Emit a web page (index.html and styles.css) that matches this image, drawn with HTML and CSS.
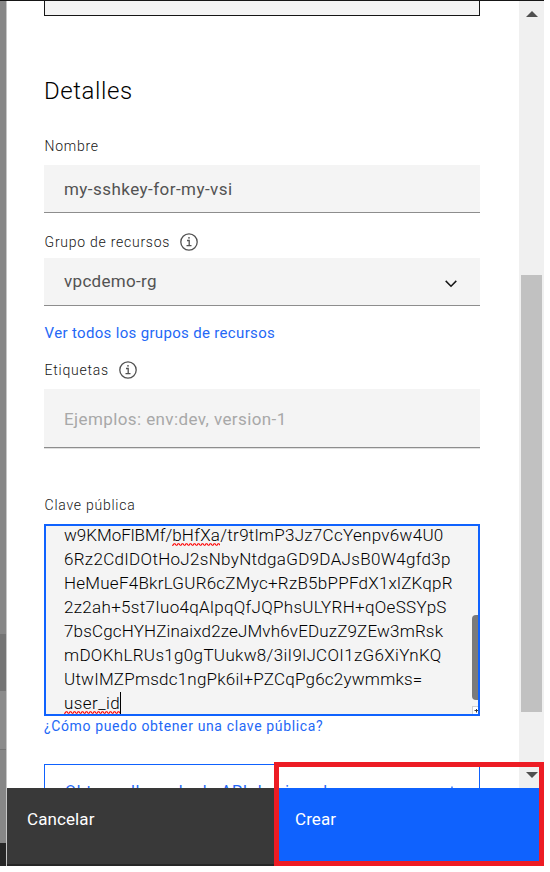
FILE: index.html
```
<!DOCTYPE html>
<html lang="es">
<head>
<meta charset="utf-8">
<title>Detalles</title>
<link rel="stylesheet" href="styles.css">
</head>
<body>
<div class="window">
  <div class="backdrop">
    <div class="shade shade-top"></div>
    <div class="shade shade-mid"></div>
    <div class="shade shade-low"></div>
    <div class="shade shade-line"></div>
    <div class="shade shade-end"></div>
    <div class="shade shade-dark"></div>
  </div>
  <div class="panel">
    <div class="scroller">
      <main class="content">
        <div class="tile"></div>
        <h2 class="title">Detalles</h2>

        <div class="label label-name">Nombre</div>
        <div class="field field-name"><span class="value name-value">my-sshkey-for-my-vsi</span></div>

        <div class="label label-group">Grupo de recursos
          <svg class="info" viewBox="0 0 18 18"><circle cx="9" cy="9" r="8.2"/><path d="M7 7.5h2.2v5M6.5 12.6h5"/><circle class="dot" cx="9" cy="4.8" r=".9"/></svg>
        </div>
        <div class="field field-group">
          <span class="value group-value">vpcdemo-rg</span>
          <svg class="chevron" viewBox="0 0 12 8"><path d="M.7.9 6 6.2 11.3.9"/></svg>
        </div>
        <a class="link link-groups">Ver todos los grupos de recursos</a>

        <div class="label label-tags">Etiquetas
          <svg class="info" viewBox="0 0 18 18"><circle cx="9" cy="9" r="8.2"/><path d="M7 7.5h2.2v5M6.5 12.6h5"/><circle class="dot" cx="9" cy="4.8" r=".9"/></svg>
        </div>
        <div class="field field-tags"><span class="placeholder">Ejemplos: env:dev, version-1</span></div>

        <div class="label label-key">Clave pública</div>
        <div class="textarea">
          <div class="lines">
            <div class="line l1"><span class="tight">w9KMoFlBMf/</span><span class="typo">bHfXa<svg class="squiggle"><use href="#wave"/></svg></span>/tr9tlmP3Jz7CcYenpv6w4U0</div>
            <div class="line l2">6Rz2CdIDOtHoJ2sNbyNtdgaGD9DAJsB0W4gfd3p</div>
            <div class="line l3">HeMueF4BkrLGUR6cZMyc+RzB5bPPFdX1xlZKqpR</div>
            <div class="line l4">2z2ah+5st7Iuo4qAlpqQfJQPhsULYRH+qOeSSYpS</div>
            <div class="line l5">7bsCgcHYHZinaixd2zeJMvh6vEDuzZ9ZEw3mRsk</div>
            <div class="line l6">mDOKhLRUs1g0gTUukw8/3iI9lJCOI1zG6XiYnKQ</div>
            <div class="line l7">UtwIMZPmsdc1ngPk6il+PZCqPg6c2ywmmks=</div>
            <div class="line l8"><span class="typo">user_id<svg class="squiggle"><use href="#wave"/></svg></span><i class="caret"></i></div>
          </div>
          <div class="inner-bar">
            <div class="inner-thumb"></div>
            <div class="grip"><svg viewBox="0 0 5 7"><path d="M1.5 3.5h3.5M3.5 2v3.5"/></svg></div>
          </div>
        </div>
        <a class="link link-help">¿Cómo puedo obtener una clave pública?</a>
        <div class="outline-button"><span>Obtener llamada de API de ejemplo</span>
          <svg class="plus" viewBox="0 0 12 12"><path d="M6 .5v11M.5 6h11"/></svg>
        </div>
      </main>
      <div class="scrollbar">
        <svg class="arrow" viewBox="0 0 12 6"><path d="M6 0l6 6H0z"/></svg>
        <div class="thumb"></div>
        <svg class="arrow" viewBox="0 0 12 6"><path d="M0 0h12L6 6z"/></svg>
      </div>
    </div>
    <footer class="actions">
      <div class="action cancel">Cancelar</div>
      <div class="action create">Crear</div>
    </footer>
  </div>
  <div class="highlight"></div>
</div>
<svg class="defs">
  <pattern id="zig" width="4" height="3" patternUnits="userSpaceOnUse"><path d="M0 2.3 1 2.3 2 .7 3 .7 4 2.3" fill="none" stroke="#f00" stroke-width="1.1"/></pattern>
  <rect id="wave" width="100%" height="3" fill="url(#zig)"/>
</svg>
</body>
</html>
```
FILE: styles.css
```
* { box-sizing: border-box; }
body { margin: 0; background: #fff; font-family: Roboto, "Liberation Sans", sans-serif; color: #161616; }
svg { display: block; flex: none; }
.defs { position: absolute; width: 0; height: 0; }

.window { position: relative; display: flex; width: 544px; height: 866px; border-top: 1px solid #161616; overflow: hidden; }
.backdrop { display: flex; flex-direction: column; width: 7px; border-right: 1px solid #c6c6c6; }
.shade-top { height: 633px; background: #878787; }
.shade-mid { height: 57px; background: #757575; }
.shade-low { height: 58px; background: #8c8c8c; }
.shade-line { height: 1px; background: #757575; }
.shade-end { height: 93px; background: #878787; }
.shade-dark { flex: 1; background: #262626; }

.panel { display: flex; flex-direction: column; width: 537px; background: #fff; }
.scroller { display: flex; height: 787px; overflow: hidden; }
.content { width: 512px; padding: 0 39px 0 37px; }
.tile { height: 15px; background: #f4f4f4; border: 1px solid #161616; border-top: 0; }
.title { margin: 59px 0 0; font-size: 24px; line-height: 32px; font-weight: 300; letter-spacing: .58px; color: #000; }

.label { display: flex; align-items: center; height: 18px; padding-left: .6px; line-height: 18px; font-size: 14px; font-weight: 300; letter-spacing: .74px; color: #161616; white-space: nowrap; }
.label-name { margin-top: 30px; }
.label-group { margin-top: 20px; }
.label-tags { margin-top: 18px; }
.label-key { margin-top: 48px; }
.info { width: 18px; height: 18px; margin-left: 10px; fill: none; stroke: #525252; stroke-width: 1.3; }
.info .dot { fill: #525252; stroke: none; }

.field { display: flex; align-items: center; justify-content: space-between; height: 48px; padding: 0 20px; background: #f4f4f4; border-bottom: 1px solid #8d8d8d; font-size: 17px; color: #525252; white-space: nowrap; }
.field-name { margin-top: 10px; }
.field-group { margin-top: 7px; padding-bottom: 2px; }
.field-tags { margin-top: 10px; height: 59px; padding-top: 1px; box-shadow: 0 1px #e0e0e0; }
.name-value { letter-spacing: .45px; }
.group-value { letter-spacing: .31px; }
.placeholder { letter-spacing: .4px; color: #a8a8a8; }
.chevron { width: 12px; height: 8px; margin: 6px 3px 0 0; fill: none; stroke: #161616; stroke-width: 1.5; }

.link { display: block; color: #2468f6; white-space: nowrap; }
.link-groups { margin-top: 17px; padding-left: .6px; font-size: 15px; line-height: 20px; letter-spacing: .33px; }
.link-help { margin-top: 1px; font-size: 14px; line-height: 18px; letter-spacing: .63px; }

.textarea { display: flex; justify-content: space-between; height: 192px; margin-top: 10px; padding-left: 18px; border: 2px solid #0f62fe; background: #f4f4f4; overflow: hidden; }
.lines { margin-top: -3px; font-size: 17px; font-weight: 300; line-height: 24px; color: #000; white-space: nowrap; }
.line { display: flex; height: 24px; }
.l1 { letter-spacing: .3px; }
.tight { letter-spacing: 0; }
.l2 { letter-spacing: .31px; }
.l3 { letter-spacing: .25px; }
.l4 { letter-spacing: .31px; }
.l5 { letter-spacing: .16px; }
.l6 { letter-spacing: .33px; }
.l7 { letter-spacing: .22px; }
.l8 { letter-spacing: .42px; }
.typo { position: relative; }
.squiggle { position: absolute; left: 0; top: 20px; width: 100%; height: 3px; }
.caret { width: 1px; height: 22px; margin-top: 1px; background: #000; }
.inner-bar { display: flex; flex-direction: column; justify-content: flex-end; width: 6px; }
.inner-thumb { height: 85px; margin-bottom: 6px; border-radius: 4px 0 0 4px; background: #7a7a7a; }
.grip { height: 8px; border: 1px solid #d0d0d0; border-width: 1px 0 0 1px; background: #fff; }
.grip svg { width: 5px; height: 7px; stroke: #393939; stroke-width: 1; }

.outline-button { display: flex; justify-content: space-between; height: 48px; margin-top: 29px; padding: 17px 21px 0 20px; border: 1px solid #0f62fe; color: #2468f6; font-size: 16px; line-height: 20px; letter-spacing: .69px; white-space: nowrap; }
.plus { width: 12px; height: 12px; margin-top: 4px; fill: none; stroke: #2468f6; stroke-width: 1.4; }

.scrollbar { display: flex; flex-direction: column; align-items: center; width: 25px; padding-top: 10px; background: #f0f0f0; }
.arrow { width: 12px; height: 6px; fill: #505050; }
.thumb { width: 21px; height: 437px; margin-top: 258px; margin-bottom: 60px; background: #c1c1c1; }

.actions { display: flex; height: 78px; border-bottom: 2px solid #262626; background: #393939; }
.action { padding: 21px 20px 0; font-size: 17px; line-height: 20px; letter-spacing: .1px; color: #fff; }
.cancel { width: 267px; }
.create { flex: 1; padding-left: 21px; background: #0f62fe; }
.highlight { position: absolute; left: 274px; top: 761px; width: 270px; height: 104px; border: 5px solid #ed1c24; }
```
